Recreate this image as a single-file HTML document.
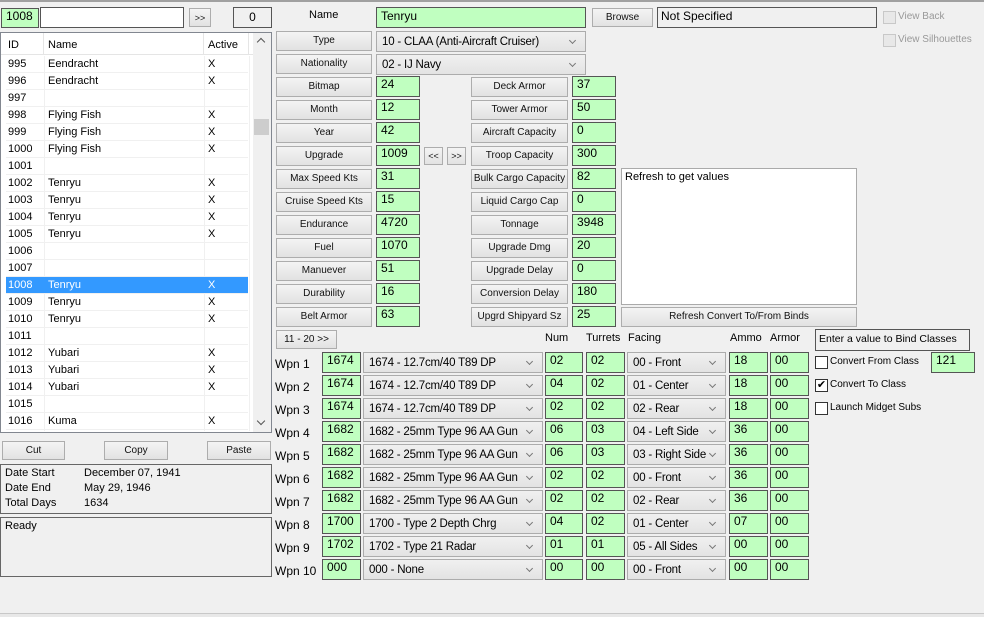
<!DOCTYPE html>
<html><head><meta charset="utf-8"><style>
*{box-sizing:border-box;margin:0;padding:0}
body{width:984px;height:617px;background:#f0f0f0;font-family:"Liberation Sans",sans-serif;font-size:11px;color:#000;position:relative;overflow:hidden}
div,span{position:absolute}
.g{background:#c0ffc0;border:1px solid #555;font-size:12px;padding:0 0 0 4px;height:20px;line-height:15px}
.w{background:#fff;border:1px solid #555}
.b{background:linear-gradient(#f4f4f4,#e2e2e2);border:1px solid #adadad;font-size:10px;text-align:center;height:20px;line-height:18px;color:#111}
.s{background:linear-gradient(#f0f0f0,#e3e3e3);border:1px solid #acacac;font-size:11.5px;letter-spacing:-0.2px;padding-left:5px;height:21px;line-height:20px;white-space:nowrap}
.s:after{content:"";position:absolute;right:10px;top:6px;width:4px;height:4px;border-right:1.3px solid #777;border-bottom:1.3px solid #777;transform:rotate(45deg)}
.r{left:6px;width:242px;height:17px;border-bottom:1px solid #f0f0f0;font-size:11px;line-height:16px}
.r span{top:0}
.r .a{left:2px}.r .n{left:42px}.r .x{left:202px}
.sel{background:#3399ff;color:#fff}
.l{font-size:12px}
.cb{width:13px;height:13px;background:#fff;border:1px solid #333}
.t{font-size:10px}
</style></head><body>
<div style="left:0;top:0;width:984px;height:2px;background:#a0a0a0"></div>
<div style="left:0;top:613px;width:984px;height:4px;border-top:1px solid #c8c8c8;background:#e8e8e8"></div>

<div class="g" style="left:1px;top:8px;width:38px;height:20px">1008</div>
<div class="w" style="left:40px;top:7px;width:144px;height:21px"></div>
<div class="b" style="left:189px;top:8px;width:22px;height:19px;font-size:9px">&gt;&gt;</div>
<div style="left:233px;top:7px;width:39px;height:21px;border:1px solid #555;text-align:center;font-size:12px;line-height:18px">0</div>

<div style="left:0;top:32px;width:272px;height:401px;background:#fff;border:1px solid #828790"></div>
<div style="left:1px;top:33px;width:252px;height:22px;border-bottom:1px solid #e5e5e5;font-size:11px">
<span style="left:7px;top:6px">ID</span><span style="left:47px;top:6px">Name</span><span style="left:207px;top:6px">Active</span>
<div style="left:42px;top:0;width:1px;height:22px;background:#e5e5e5"></div>
<div style="left:202px;top:0;width:1px;height:22px;background:#e5e5e5"></div>
<div style="left:247px;top:0;width:1px;height:22px;background:#e5e5e5"></div>
</div>
<div style="left:44px;top:56px;width:1px;height:375px;background:#f0f0f0"></div>
<div style="left:204px;top:56px;width:1px;height:375px;background:#f0f0f0"></div>
<div style="left:249px;top:56px;width:1px;height:375px;background:#f0f0f0"></div>
<div class="r" style="top:56px"><span class="a">995</span><span class="n">Eendracht</span><span class="x">X</span></div>
<div class="r" style="top:73px"><span class="a">996</span><span class="n">Eendracht</span><span class="x">X</span></div>
<div class="r" style="top:90px"><span class="a">997</span></div>
<div class="r" style="top:107px"><span class="a">998</span><span class="n">Flying Fish</span><span class="x">X</span></div>
<div class="r" style="top:124px"><span class="a">999</span><span class="n">Flying Fish</span><span class="x">X</span></div>
<div class="r" style="top:141px"><span class="a">1000</span><span class="n">Flying Fish</span><span class="x">X</span></div>
<div class="r" style="top:158px"><span class="a">1001</span></div>
<div class="r" style="top:175px"><span class="a">1002</span><span class="n">Tenryu</span><span class="x">X</span></div>
<div class="r" style="top:192px"><span class="a">1003</span><span class="n">Tenryu</span><span class="x">X</span></div>
<div class="r" style="top:209px"><span class="a">1004</span><span class="n">Tenryu</span><span class="x">X</span></div>
<div class="r" style="top:226px"><span class="a">1005</span><span class="n">Tenryu</span><span class="x">X</span></div>
<div class="r" style="top:243px"><span class="a">1006</span></div>
<div class="r" style="top:260px"><span class="a">1007</span></div>
<div class="r sel" style="top:277px"><span class="a">1008</span><span class="n">Tenryu</span><span class="x">X</span></div>
<div class="r" style="top:294px"><span class="a">1009</span><span class="n">Tenryu</span><span class="x">X</span></div>
<div class="r" style="top:311px"><span class="a">1010</span><span class="n">Tenryu</span><span class="x">X</span></div>
<div class="r" style="top:328px"><span class="a">1011</span></div>
<div class="r" style="top:345px"><span class="a">1012</span><span class="n">Yubari</span><span class="x">X</span></div>
<div class="r" style="top:362px"><span class="a">1013</span><span class="n">Yubari</span><span class="x">X</span></div>
<div class="r" style="top:379px"><span class="a">1014</span><span class="n">Yubari</span><span class="x">X</span></div>
<div class="r" style="top:396px"><span class="a">1015</span></div>
<div class="r" style="top:413px"><span class="a">1016</span><span class="n">Kuma</span><span class="x">X</span></div>
<div style="left:253px;top:33px;width:18px;height:399px;background:#f0f0f0"></div>
<div style="left:258px;top:39px;width:6px;height:6px;border-left:1.5px solid #555;border-top:1.5px solid #555;transform:rotate(45deg)"></div>
<div style="left:258px;top:418px;width:6px;height:6px;border-right:1.5px solid #555;border-bottom:1.5px solid #555;transform:rotate(45deg)"></div>
<div style="left:254px;top:119px;width:15px;height:16px;background:#cdcdcd"></div>

<div class="b" style="left:2px;top:441px;width:63px;height:19px">Cut</div>
<div class="b" style="left:104px;top:441px;width:64px;height:19px">Copy</div>
<div class="b" style="left:207px;top:441px;width:64px;height:19px">Paste</div>
<div style="left:0;top:464px;width:272px;height:50px;border:1px solid #666;font-size:11px">
<span style="left:4px;top:2px">Date Start</span><span style="left:83px;top:2px">December 07, 1941</span>
<span style="left:4px;top:17px">Date End</span><span style="left:83px;top:17px">May 29, 1946</span>
<span style="left:4px;top:32px">Total Days</span><span style="left:83px;top:32px">1634</span></div>
<div style="left:0;top:517px;width:272px;height:60px;border:1px solid #666;font-size:11px"><span style="left:4px;top:2px">Ready</span></div>

<span class="t" style="left:309px;top:9px;font-size:11px">Name</span>
<div class="g" style="left:376px;top:7px;width:210px;height:21px;padding-top:1px">Tenryu</div>
<div class="b" style="left:592px;top:8px;width:61px;height:19px">Browse</div>
<div style="left:657px;top:7px;width:220px;height:21px;border:1px solid #555;font-size:12px;padding:1px 0 0 3px">Not Specified</div>
<div class="cb" style="left:883px;top:11px;background:#e8e8e8;border-color:#c8c8c8"></div><span style="left:898px;top:11px;color:#999;font-size:10px">View Back</span>
<div class="cb" style="left:883px;top:34px;background:#e8e8e8;border-color:#c8c8c8"></div><span style="left:898px;top:34px;color:#999;font-size:10px">View Silhouettes</span>

<div class="b" style="left:276px;top:31px;width:96px">Type</div>
<div class="s" style="left:376px;top:31px;width:210px">10 - CLAA (Anti-Aircraft Cruiser)</div>
<div class="b" style="left:276px;top:54px;width:96px">Nationality</div>
<div class="s" style="left:376px;top:54px;width:210px">02 - IJ Navy</div>

<div class="b" style="left:276px;top:77px;width:96px">Bitmap</div><div class="g" style="left:376px;top:76px;width:44px;height:21px">24</div>
<div class="b" style="left:276px;top:100px;width:96px">Month</div><div class="g" style="left:376px;top:99px;width:44px;height:21px">12</div>
<div class="b" style="left:276px;top:123px;width:96px">Year</div><div class="g" style="left:376px;top:122px;width:44px;height:21px">42</div>
<div class="b" style="left:276px;top:146px;width:96px">Upgrade</div><div class="g" style="left:376px;top:145px;width:44px;height:21px">1009</div>
<div class="b" style="left:424px;top:147px;width:19px;height:18px;font-size:9px;line-height:16px">&lt;&lt;</div>
<div class="b" style="left:447px;top:147px;width:19px;height:18px;font-size:9px;line-height:16px">&gt;&gt;</div>
<div class="b" style="left:276px;top:169px;width:96px">Max Speed Kts</div><div class="g" style="left:376px;top:168px;width:44px;height:21px">31</div>
<div class="b" style="left:276px;top:192px;width:96px">Cruise Speed Kts</div><div class="g" style="left:376px;top:191px;width:44px;height:21px">15</div>
<div class="b" style="left:276px;top:215px;width:96px">Endurance</div><div class="g" style="left:376px;top:214px;width:44px;height:21px">4720</div>
<div class="b" style="left:276px;top:238px;width:96px">Fuel</div><div class="g" style="left:376px;top:237px;width:44px;height:21px">1070</div>
<div class="b" style="left:276px;top:261px;width:96px">Manuever</div><div class="g" style="left:376px;top:260px;width:44px;height:21px">51</div>
<div class="b" style="left:276px;top:284px;width:96px">Durability</div><div class="g" style="left:376px;top:283px;width:44px;height:21px">16</div>
<div class="b" style="left:276px;top:307px;width:96px">Belt Armor</div><div class="g" style="left:376px;top:306px;width:44px;height:21px">63</div>

<div class="b" style="left:471px;top:77px;width:97px">Deck Armor</div><div class="g" style="left:572px;top:76px;width:44px;height:21px">37</div>
<div class="b" style="left:471px;top:100px;width:97px">Tower Armor</div><div class="g" style="left:572px;top:99px;width:44px;height:21px">50</div>
<div class="b" style="left:471px;top:123px;width:97px">Aircraft Capacity</div><div class="g" style="left:572px;top:122px;width:44px;height:21px">0</div>
<div class="b" style="left:471px;top:146px;width:97px">Troop Capacity</div><div class="g" style="left:572px;top:145px;width:44px;height:21px">300</div>
<div class="b" style="left:471px;top:169px;width:97px">Bulk Cargo Capacity</div><div class="g" style="left:572px;top:168px;width:44px;height:21px">82</div>
<div class="b" style="left:471px;top:192px;width:97px">Liquid Cargo Cap</div><div class="g" style="left:572px;top:191px;width:44px;height:21px">0</div>
<div class="b" style="left:471px;top:215px;width:97px">Tonnage</div><div class="g" style="left:572px;top:214px;width:44px;height:21px">3948</div>
<div class="b" style="left:471px;top:238px;width:97px">Upgrade Dmg</div><div class="g" style="left:572px;top:237px;width:44px;height:21px">20</div>
<div class="b" style="left:471px;top:261px;width:97px">Upgrade Delay</div><div class="g" style="left:572px;top:260px;width:44px;height:21px">0</div>
<div class="b" style="left:471px;top:284px;width:97px">Conversion Delay</div><div class="g" style="left:572px;top:283px;width:44px;height:21px">180</div>
<div class="b" style="left:471px;top:307px;width:97px">Upgrd Shipyard Sz</div><div class="g" style="left:572px;top:306px;width:44px;height:21px">25</div>

<div style="left:621px;top:168px;width:236px;height:137px;background:#fff;border:1px solid #aaa;font-size:11px;padding:2px 3px">Refresh to get values</div>
<div class="b" style="left:621px;top:307px;width:236px">Refresh Convert To/From Binds</div>

<div class="b" style="left:276px;top:330px;width:61px;height:19px">11 - 20 &gt;&gt;</div>
<span style="left:545px;top:332px;font-size:11px">Num</span>
<span style="left:586px;top:332px;font-size:11px">Turrets</span>
<span style="left:628px;top:332px;font-size:11px">Facing</span>
<span style="left:730px;top:332px;font-size:11px">Ammo</span>
<span style="left:770px;top:332px;font-size:11px">Armor</span>

<div style="left:815px;top:329px;width:155px;height:22px;border:1px solid #555;font-size:10.5px;padding:3px 0 0 3px;white-space:nowrap">Enter a value to Bind Classes</div>
<div class="cb" style="left:815px;top:356px"></div><span style="left:830px;top:356px;font-size:10px">Convert From Class</span>
<div class="g" style="left:931px;top:352px;width:44px;height:21px">121</div>
<div class="cb" style="left:815px;top:379px;font-size:11px;line-height:11px;text-align:center">✔</div><span style="left:830px;top:379px;font-size:10px">Convert To Class</span>
<div class="cb" style="left:815px;top:402px"></div><span style="left:830px;top:402px;font-size:10px">Launch Midget Subs</span>

<span class="l" style="left:275px;top:357px">Wpn 1</span><div class="g" style="left:322px;top:352px;width:39px;height:21px">1674</div><div class="s" style="left:363px;top:352px;width:180px">1674 - 12.7cm/40 T89 DP</div><div class="g" style="left:545px;top:352px;width:38px;height:21px">02</div><div class="g" style="left:586px;top:352px;width:39px;height:21px">02</div><div class="s" style="left:627px;top:352px;width:99px">00 - Front</div><div class="g" style="left:729px;top:352px;width:39px;height:21px">18</div><div class="g" style="left:770px;top:352px;width:39px;height:21px">00</div>
<span class="l" style="left:275px;top:380px">Wpn 2</span><div class="g" style="left:322px;top:375px;width:39px;height:21px">1674</div><div class="s" style="left:363px;top:375px;width:180px">1674 - 12.7cm/40 T89 DP</div><div class="g" style="left:545px;top:375px;width:38px;height:21px">04</div><div class="g" style="left:586px;top:375px;width:39px;height:21px">02</div><div class="s" style="left:627px;top:375px;width:99px">01 - Center</div><div class="g" style="left:729px;top:375px;width:39px;height:21px">18</div><div class="g" style="left:770px;top:375px;width:39px;height:21px">00</div>
<span class="l" style="left:275px;top:403px">Wpn 3</span><div class="g" style="left:322px;top:398px;width:39px;height:21px">1674</div><div class="s" style="left:363px;top:398px;width:180px">1674 - 12.7cm/40 T89 DP</div><div class="g" style="left:545px;top:398px;width:38px;height:21px">02</div><div class="g" style="left:586px;top:398px;width:39px;height:21px">02</div><div class="s" style="left:627px;top:398px;width:99px">02 - Rear</div><div class="g" style="left:729px;top:398px;width:39px;height:21px">18</div><div class="g" style="left:770px;top:398px;width:39px;height:21px">00</div>
<span class="l" style="left:275px;top:426px">Wpn 4</span><div class="g" style="left:322px;top:421px;width:39px;height:21px">1682</div><div class="s" style="left:363px;top:421px;width:180px">1682 - 25mm Type 96 AA Gun</div><div class="g" style="left:545px;top:421px;width:38px;height:21px">06</div><div class="g" style="left:586px;top:421px;width:39px;height:21px">03</div><div class="s" style="left:627px;top:421px;width:99px">04 - Left Side</div><div class="g" style="left:729px;top:421px;width:39px;height:21px">36</div><div class="g" style="left:770px;top:421px;width:39px;height:21px">00</div>
<span class="l" style="left:275px;top:449px">Wpn 5</span><div class="g" style="left:322px;top:444px;width:39px;height:21px">1682</div><div class="s" style="left:363px;top:444px;width:180px">1682 - 25mm Type 96 AA Gun</div><div class="g" style="left:545px;top:444px;width:38px;height:21px">06</div><div class="g" style="left:586px;top:444px;width:39px;height:21px">03</div><div class="s" style="left:627px;top:444px;width:99px">03 - Right Side</div><div class="g" style="left:729px;top:444px;width:39px;height:21px">36</div><div class="g" style="left:770px;top:444px;width:39px;height:21px">00</div>
<span class="l" style="left:275px;top:472px">Wpn 6</span><div class="g" style="left:322px;top:467px;width:39px;height:21px">1682</div><div class="s" style="left:363px;top:467px;width:180px">1682 - 25mm Type 96 AA Gun</div><div class="g" style="left:545px;top:467px;width:38px;height:21px">02</div><div class="g" style="left:586px;top:467px;width:39px;height:21px">02</div><div class="s" style="left:627px;top:467px;width:99px">00 - Front</div><div class="g" style="left:729px;top:467px;width:39px;height:21px">36</div><div class="g" style="left:770px;top:467px;width:39px;height:21px">00</div>
<span class="l" style="left:275px;top:495px">Wpn 7</span><div class="g" style="left:322px;top:490px;width:39px;height:21px">1682</div><div class="s" style="left:363px;top:490px;width:180px">1682 - 25mm Type 96 AA Gun</div><div class="g" style="left:545px;top:490px;width:38px;height:21px">02</div><div class="g" style="left:586px;top:490px;width:39px;height:21px">02</div><div class="s" style="left:627px;top:490px;width:99px">02 - Rear</div><div class="g" style="left:729px;top:490px;width:39px;height:21px">36</div><div class="g" style="left:770px;top:490px;width:39px;height:21px">00</div>
<span class="l" style="left:275px;top:518px">Wpn 8</span><div class="g" style="left:322px;top:513px;width:39px;height:21px">1700</div><div class="s" style="left:363px;top:513px;width:180px">1700 - Type 2 Depth Chrg</div><div class="g" style="left:545px;top:513px;width:38px;height:21px">04</div><div class="g" style="left:586px;top:513px;width:39px;height:21px">02</div><div class="s" style="left:627px;top:513px;width:99px">01 - Center</div><div class="g" style="left:729px;top:513px;width:39px;height:21px">07</div><div class="g" style="left:770px;top:513px;width:39px;height:21px">00</div>
<span class="l" style="left:275px;top:541px">Wpn 9</span><div class="g" style="left:322px;top:536px;width:39px;height:21px">1702</div><div class="s" style="left:363px;top:536px;width:180px">1702 - Type 21 Radar</div><div class="g" style="left:545px;top:536px;width:38px;height:21px">01</div><div class="g" style="left:586px;top:536px;width:39px;height:21px">01</div><div class="s" style="left:627px;top:536px;width:99px">05 - All Sides</div><div class="g" style="left:729px;top:536px;width:39px;height:21px">00</div><div class="g" style="left:770px;top:536px;width:39px;height:21px">00</div>
<span class="l" style="left:275px;top:564px">Wpn 10</span><div class="g" style="left:322px;top:559px;width:39px;height:21px">000</div><div class="s" style="left:363px;top:559px;width:180px">000 - None</div><div class="g" style="left:545px;top:559px;width:38px;height:21px">00</div><div class="g" style="left:586px;top:559px;width:39px;height:21px">00</div><div class="s" style="left:627px;top:559px;width:99px">00 - Front</div><div class="g" style="left:729px;top:559px;width:39px;height:21px">00</div><div class="g" style="left:770px;top:559px;width:39px;height:21px">00</div>
</body></html>
